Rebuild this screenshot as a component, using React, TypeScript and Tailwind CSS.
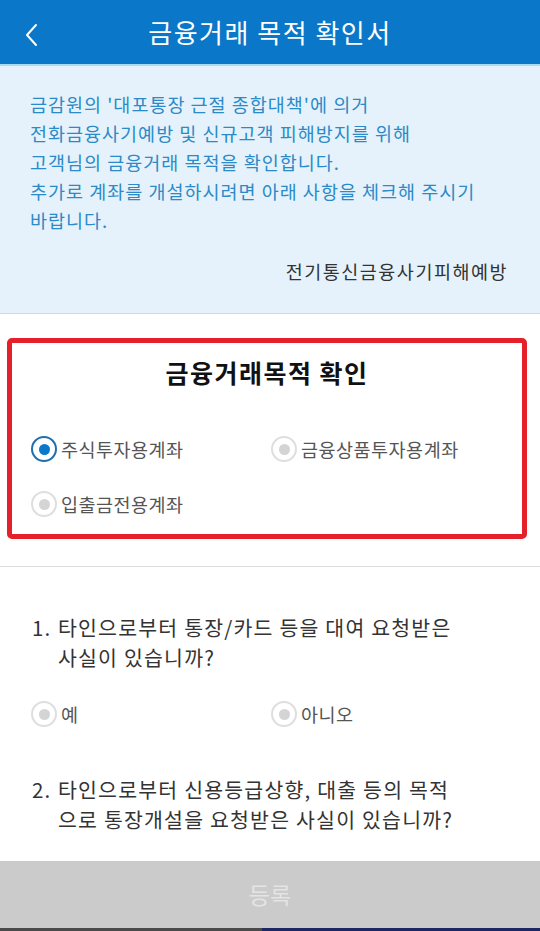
import { useState } from 'react';

const font = { fontFamily: '"Noto Sans CJK KR", "Noto Sans", sans-serif' };

function Radio({ checked, label, onClick }: { checked: boolean; label: string; onClick?: () => void }) {
  return (
    <button onClick={onClick} className="flex items-center h-[40px] text-left">
      {checked ? (
        <span className="w-[26px] h-[26px] rounded-full border-[2.5px] border-[#1f6fae] flex items-center justify-center">
          <span className="w-[11px] h-[11px] rounded-full bg-[#0b78c9]" />
        </span>
      ) : (
        <span className="w-[26px] h-[26px] rounded-full border-2 border-[#dedede] flex items-center justify-center">
          <span className="w-[11px] h-[11px] rounded-full bg-[#d4d4d4]" />
        </span>
      )}
      <span className="ml-[4px] text-[18.5px] tracking-[0.5px] text-[#555] leading-none">{label}</span>
    </button>
  );
}

export default function App() {
  const [purpose, setPurpose] = useState('stock');

  return (
    <div className="h-[931px] w-[540px] flex flex-col bg-white overflow-hidden" style={font}>
      <header className="h-[66px] shrink-0 bg-[#0b77c8] border-b-2 border-[#a9dcf4] relative flex items-center justify-center">
        <button className="absolute left-[20px] top-[18px] p-1">
          <svg width="16" height="26" viewBox="0 0 16 26" fill="none">
            <polyline points="12,3 3,13 12,23" stroke="white" strokeWidth="2" strokeLinecap="round" strokeLinejoin="round" />
          </svg>
        </button>
        <h1 className="text-white text-[26px] tracking-[1.5px] leading-none">금융거래 목적 확인서</h1>
      </header>

      <div className="flex-1 overflow-hidden">
        <section className="bg-[#e5f2fb] border-b border-[#d3d8dc] pt-[24px] pb-[27px] pl-[30px] pr-[20px]">
          <p className="text-[#2b8ac7] text-[18.5px] tracking-[1px] leading-[29px]">
            금감원의 '대포통장 근절 종합대책'에 의거
            <br />
            전화금융사기예방 및 신규고객 피해방지를 위해
            <br />
            고객님의 금융거래 목적을 확인합니다.
            <br />
            추가로 계좌를 개설하시려면 아래 사항을 체크해 주시기
            <br />
            바랍니다.
          </p>
          <p className="mt-[22px] pr-[12px] text-right text-[#333] text-[18.5px] tracking-[1.5px] leading-[29px]">전기통신금융사기피해예방</p>
        </section>

        <div className="pt-[24px] pb-[27px] border-b border-[#dcdcdc]">
          <div className="ml-[7px] w-[520px] h-[201px] border-[5px] border-[#e6202b] rounded-[5px] pt-[13px]">
            <h2 className="text-center text-[25px] tracking-[1.5px] font-bold text-[#111] leading-[32px]">금융거래목적 확인</h2>
            <div className="mt-[41px] pl-[19px] grid grid-cols-[240px_1fr] gap-y-[15px]">
              <Radio checked={purpose === 'stock'} label="주식투자용계좌" onClick={() => setPurpose('stock')} />
              <Radio checked={purpose === 'fund'} label="금융상품투자용계좌" />
              <Radio checked={purpose === 'cash'} label="입출금전용계좌" />
            </div>
          </div>
        </div>

        <div className="pl-[32px] pr-[10px] pt-[45px] text-[20.5px] tracking-[1.2px] text-[#333] leading-[30px]">
          <div className="flex">
            <span className="w-[26px] shrink-0">1.</span>
            <p>
              타인으로부터 통장/카드 등을 대여 요청받은
              <br />
              사실이 있습니까?
            </p>
          </div>
          <div className="mt-[22px] -ml-[1px] grid grid-cols-[240px_1fr] tracking-normal">
            <Radio checked={false} label="예" />
            <Radio checked={false} label="아니오" />
          </div>
          <div className="flex mt-[40px]">
            <span className="w-[26px] shrink-0">2.</span>
            <p>
              타인으로부터 신용등급상향, 대출 등의 목적
              <br />
              으로 통장개설을 요청받은 사실이 있습니까?
            </p>
          </div>
        </div>
      </div>

      <button className="h-[67px] shrink-0 bg-[#cbcbcb] text-[#e4e4e4] text-[23px] flex items-center justify-center">등록</button>
      <div className="h-[3px] shrink-0 flex">
        <div className="w-[262px] bg-[#4a4a4a]" />
        <div className="flex-1 bg-[#1d2763]" />
      </div>
    </div>
  );
}
